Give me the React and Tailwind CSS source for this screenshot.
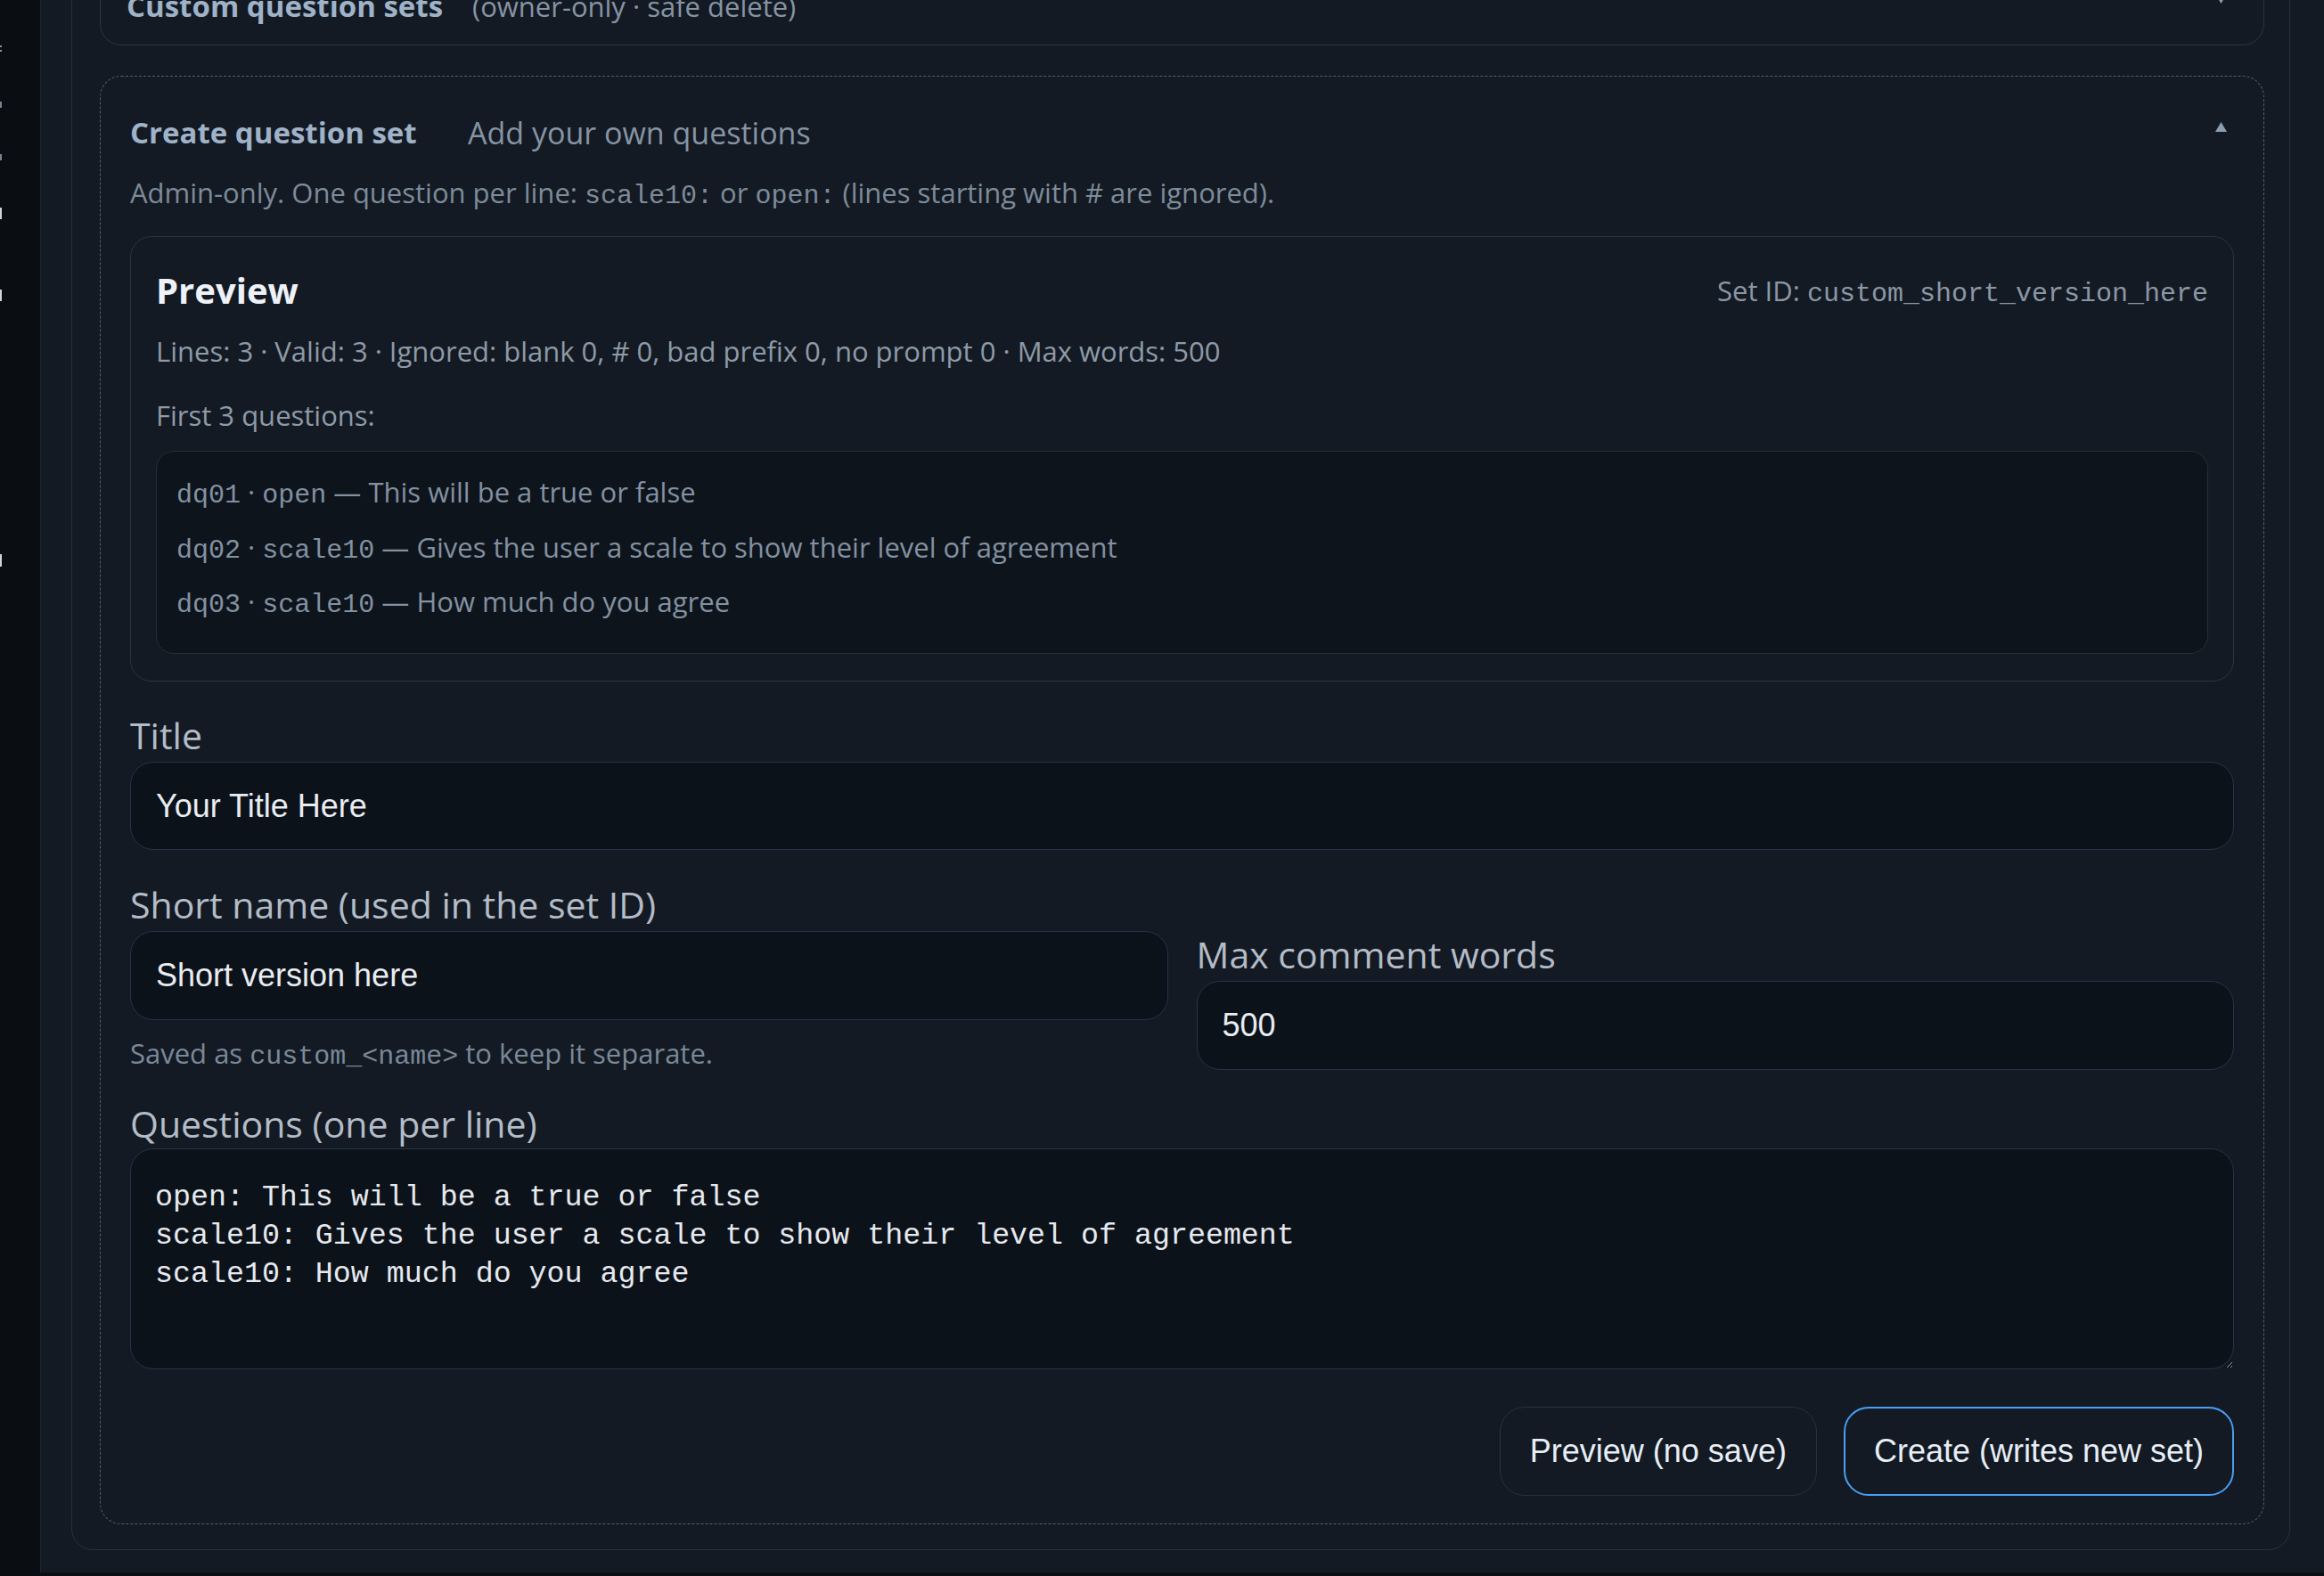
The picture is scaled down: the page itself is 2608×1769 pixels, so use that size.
import React from "react";

const rows = [
  { id: "dq01", kind: "open", text: "This will be a true or false" },
  { id: "dq02", kind: "scale10", text: "Gives the user a scale to show their level of agreement" },
  { id: "dq03", kind: "scale10", text: "How much do you agree" },
];

// bits of the clipped sidebar text on the far left
const marks = [
  "mt-[51px] h-[2px] bg-[#8d939b]",
  "mt-[3px] h-[2px] bg-[#8d939b]",
  "mt-[56px] h-[7px] bg-[#7d838b]",
  "mt-[52px] h-[7px] bg-[#7d838b]",
  "mt-[53px] h-[13px] bg-[#d0d4d9]",
  "mt-[79px] h-[13px] bg-[#d0d4d9]",
  "mt-[284px] h-[14px] bg-[#d0d4d9]",
];

const Caret = ({ up, className }) => (
  <svg width="13" height="11" viewBox="0 0 13 11" className={className}>
    {up ? (
      <polygon points="6.5,0 13,11 0,11" fill="#8d9db0" />
    ) : (
      <polygon points="0,0 13,0 6.5,11" fill="#8d9db0" />
    )}
  </svg>
);

const Code = ({ children }) => (
  <code className="font-['Liberation_Mono',monospace] text-[30px] leading-none">{children}</code>
);

export default function App() {
  return (
    <div className="flex h-[1769px] overflow-hidden bg-[#0a0d11] font-['Open_Sans',sans-serif] text-[31px]">
      <aside className="flex w-[45px] shrink-0 flex-col">
        {marks.map((m, i) => (
          <span key={i} className={`block w-[2px] ${m}`} />
        ))}
      </aside>

      <main className="flex-1 self-start border-l border-[#1b2633] bg-[#131a23] pb-[25px] pl-[34px] pr-[38px]">
        <section className="-mt-[95px] flex flex-col gap-[34px] rounded-[24px] border border-[#28313c] pb-[28px] pl-[31px] pr-[28px] pt-[31px]">
          {/* collapsed card above */}
          <div className="rounded-[24px] border border-[#2b3542] px-[29px] pb-[14px] pt-[40px]">
            <div className="flex h-[58px] items-center justify-between">
              <div className="flex items-center">
                <span className="w-[388px] text-[33px] font-bold text-[#9fb2c7]">Custom question sets</span>
                <span className="text-[31px] text-[#8794a3]">(owner-only · safe delete)</span>
              </div>
              <Caret className="mb-[18px] mr-[12px]" />
            </div>
          </div>

          {/* create question set */}
          <div className="rounded-[24px] border border-dashed border-[#56606e] px-[33px] pb-[31px] pt-[34px]">
            <div className="flex h-[58px] items-center justify-between">
              <div className="flex items-center">
                <span className="w-[379px] text-[33px] font-bold text-[#9fb2c7]">Create question set</span>
                <span className="text-[34px] text-[#8794a3]">Add your own questions</span>
              </div>
              <Caret up className="mb-[14px] mr-[8px]" />
            </div>
            <p className="mt-[16px] leading-[44px] text-[#7e8b9a]">
              Admin-only. One question per line: <Code>scale10:</Code> or <Code>open:</Code> (lines starting with # are ignored).
            </p>

            <div className="mt-[27px] rounded-[24px] border border-[#2a3441] px-[28px] pb-[30px] pt-[28px]">
              <div className="flex h-[64px] items-center justify-between">
                <h3 className="text-[40px] font-bold text-[#eef2f8]">Preview</h3>
                <span className="text-[#8b97a5]">
                  Set ID: <Code>custom_short_version_here</Code>
                </span>
              </div>
              <p className="mt-[14px] leading-[44px] text-[#8e9aa8]">
                Lines: 3 · Valid: 3 · Ignored: blank 0, # 0, bad prefix 0, no prompt 0 · Max words: 500
              </p>
              <p className="mt-[28px] leading-[44px] text-[#8e9aa8]">First 3 questions:</p>
              <div className="mt-[18px] flex h-[228px] flex-col gap-[17.5px] rounded-[20px] border border-[#252e39] bg-[#0e141c] pl-[22px] pt-[23px] text-[#8391a1]">
                {rows.map((r) => (
                  <div key={r.id} className="h-[44px] leading-[44px]">
                    <Code>{r.id}</Code> · <Code>{r.kind}</Code> — {r.text}
                  </div>
                ))}
              </div>
            </div>

            <label className="mb-[3px] mt-[33px] block text-[41px] leading-[54px] text-[#b3bcc7]">Title</label>
            <input
              defaultValue="Your Title Here"
              className="block h-[99px] w-full rounded-[26px] border border-[#263349] bg-[#0c121a] px-[28px] font-['Liberation_Sans',Arial,sans-serif] text-[36px] text-[#e9ecf0] outline-none"
            />

            <div className="mt-[34px] grid grid-cols-2 items-end gap-x-[32px]">
              <div>
                <label className="mb-[3px] block text-[41px] leading-[54px] text-[#b3bcc7]">
                  Short name (used in the set ID)
                </label>
                <input
                  defaultValue="Short version here"
                  className="block h-[100px] w-full rounded-[26px] border border-[#263349] bg-[#0c121a] px-[28px] font-['Liberation_Sans',Arial,sans-serif] text-[36px] text-[#e9ecf0] outline-none"
                />
                <p className="mt-[15px] leading-[44px] text-[#7b8898]">
                  Saved as <Code>custom_&lt;name&gt;</Code> to keep it separate.
                </p>
              </div>
              <div className="mb-[3px]">
                <label className="mb-[3px] block text-[41px] leading-[54px] text-[#b3bcc7]">Max comment words</label>
                <input
                  defaultValue="500"
                  className="block h-[100px] w-full rounded-[26px] border border-[#263349] bg-[#0c121a] px-[28px] font-['Liberation_Sans',Arial,sans-serif] text-[36px] text-[#e9ecf0] outline-none"
                />
              </div>
            </div>

            <label className="mb-[1px] mt-[30px] block text-[41px] leading-[54px] text-[#b3bcc7]">
              Questions (one per line)
            </label>
            <textarea
              defaultValue={
                "open: This will be a true or false\nscale10: Gives the user a scale to show their level of agreement\nscale10: How much do you agree"
              }
              className="block h-[248px] w-full rounded-[26px] border border-[#263349] bg-[#0c121a] px-[27px] pt-[33px] font-['Liberation_Mono',monospace] text-[33.3px] leading-[43px] text-[#e6e9ee] outline-none [color-scheme:dark]"
            />

            <div className="mt-[42px] flex justify-end gap-[30px]">
              <button className="h-[100px] rounded-[28px] border border-[#27313f] px-[33px] font-['Liberation_Sans',Arial,sans-serif] text-[36px] text-[#e8eef6]">
                Preview (no save)
              </button>
              <button className="h-[100px] rounded-[28px] border-2 border-[#4a9ff5] px-[32px] font-['Liberation_Sans',Arial,sans-serif] text-[36px] text-[#e8eef6]">
                Create (writes new set)
              </button>
            </div>
          </div>
        </section>
      </main>
    </div>
  );
}
